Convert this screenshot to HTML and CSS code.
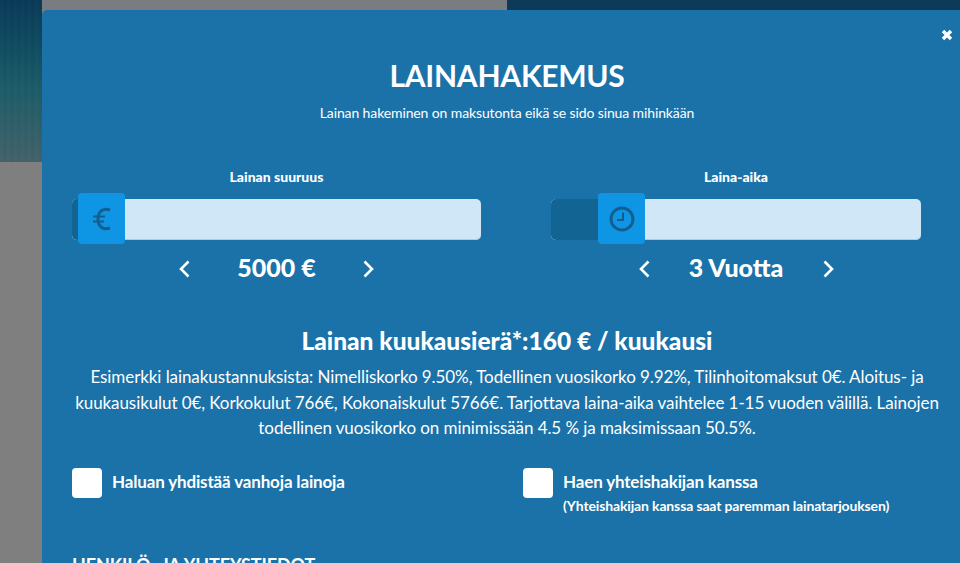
FILE: index.html
```html
<!DOCTYPE html>
<html lang="fi">
<head>
  <meta charset="UTF-8" />
  <title>Lainahakemus</title>
  <link rel="stylesheet" href="styles.css">
</head>
<body>

<div class="backdrop">
  <div class="bg-photo"></div>
  <div class="bg-gap"></div>
  <div class="bg-dark"></div>
</div>

<div class="modal">
  <svg class="close" width="12" height="12" viewBox="0 0 12 12"><path d="M2 2l8 8M10 2l-8 8" /></svg>
  <h1>LAINAHAKEMUS</h1>
  <p class="lead">Lainan hakeminen on maksutonta eikä se sido sinua mihinkään</p>

  <div class="sliders">
    <div class="slider-box">
      <div class="slider-label">Lainan suuruus</div>
      <div class="track amount">
        <div class="fill"></div>
        <div class="handle">
          <svg width="18" height="24" viewBox="0 0 18 24"><path d="M17 3.200C11 .5 5 4 5 12s6 11.500 12 8.800" fill="none" stroke="#125f8f" stroke-width="3"/><path d="M0 9.500h12M0 14.500h11" fill="none" stroke="#125f8f" stroke-width="2.200"/></svg>
        </div>
      </div>
      <div class="stepper">
        <svg class="chev" width="12" height="18" viewBox="0 0 12 18"><path d="M10.500 1.500L3 9l7.500 7.500" /></svg>
        <span class="value">5000 €</span>
        <svg class="chev" width="12" height="18" viewBox="0 0 12 18"><path d="M1.500 1.500L9 9l-7.500 7.500" /></svg>
      </div>
    </div>
    <div class="slider-box">
      <div class="slider-label">Laina-aika</div>
      <div class="track term">
        <div class="fill"></div>
        <div class="handle">
          <svg width="26" height="26" viewBox="0 0 26 26"><circle cx="13" cy="13" r="11" fill="none" stroke="#125f8f" stroke-width="3"/><path d="M14 6.500v7.500H8" fill="none" stroke="#125f8f" stroke-width="2"/></svg>
        </div>
      </div>
      <div class="stepper">
        <svg class="chev" width="12" height="18" viewBox="0 0 12 18"><path d="M10.500 1.500L3 9l7.500 7.500" /></svg>
        <span class="value">3 Vuotta</span>
        <svg class="chev" width="12" height="18" viewBox="0 0 12 18"><path d="M1.500 1.500L9 9l-7.500 7.500" /></svg>
      </div>
    </div>
  </div>

  <h2>Lainan kuukausierä*:160 € / kuukausi</h2>
  <p class="terms">Esimerkki lainakustannuksista: Nimelliskorko 9.50%, Todellinen vuosikorko 9.92%, Tilinhoitomaksut 0€. Aloitus- ja kuukausikulut 0€, Korkokulut 766€, Kokonaiskulut 5766€. Tarjottava laina-aika vaihtelee 1-15 vuoden välillä. Lainojen todellinen vuosikorko on minimissään 4.5 % ja maksimissaan 50.5%.</p>

  <div class="checks">
    <div class="check-item">
      <div class="checkbox"></div>
      <div class="check-text">Haluan yhdistää vanhoja lainoja</div>
    </div>
    <div class="check-item">
      <div class="checkbox"></div>
      <div class="check-text">Haen yhteishakijan kanssa
        <small>(Yhteishakijan kanssa saat paremman lainatarjouksen)</small>
      </div>
    </div>
  </div>

  <h3>HENKILÖ- JA YHTEYSTIEDOT</h3>
</div>

</body>
</html>
```

FILE: styles.css
```css
html, body {
  margin: 0;
  height: 100%;
  overflow: hidden;
}
body {
  font-family: Lato, sans-serif;
  background: #7f7f7f;
  color: white;
}
.backdrop {
  display: flex;
  height: 10px;
}
.bg-photo {
  width: 42px;
  height: 162px;
  background:
    repeating-linear-gradient(90deg, rgba(255,255,255,0.012) 0 3px, rgba(0,0,0,0.012) 3px 7px),
    linear-gradient(180deg, #0b3a59 0%, #0f4a60 25%, #1c5c68 55%, #44626a 100%);
}
.bg-gap {
  width: 465px;
  background: #797c80;
}
.bg-dark {
  flex: 1;
  background: #0d3a58;
}
.modal {
  position: absolute;
  left: 42px;
  top: 10px;
  width: 930px;
  height: 700px;
  box-sizing: border-box;
  padding: 0 30px;
  background: #1a72a9;
  border-radius: 5px 0 0 0;
  text-align: center;
}
.close {
  position: absolute;
  top: 19px;
  left: 899px;
  fill: none;
  stroke: white;
  stroke-width: 3.4;
}
h1 {
  margin: 0;
  padding-top: 46px;
  font-size: 30px;
  line-height: 38px;
  font-weight: 700;
  letter-spacing: -0.25px;
}
.lead {
  margin: 10px 0 0;
  font-size: 14px;
  line-height: 18px;
  letter-spacing: -0.12px;
}
.sliders {
  display: grid;
  grid-template-columns: 409px 370px;
  column-gap: 70px;
  margin-top: 46px;
}
.slider-label {
  font-size: 14px;
  font-weight: 900;
  line-height: 18px;
}
.track {
  position: relative;
  height: 41px;
  margin-top: 13px;
  background: #d0e7f8;
  border-radius: 5px;
  box-shadow: inset 0 -1px #a9cde6;
}
.fill {
  height: 41px;
  background: #126493;
  border-radius: 5px 0 0 5px;
}
.amount .fill { width: 6px; }
.term .fill { width: 47px; }
.handle {
  position: absolute;
  top: -6px;
  width: 47px;
  height: 51px;
  background: #0e95e4;
  border-radius: 4px;
  display: flex;
  align-items: center;
  justify-content: center;
}
.amount .handle { left: 6px; }
.term .handle { left: 47px; }
.stepper {
  display: flex;
  align-items: center;
  justify-content: center;
  margin-top: 12px;
  height: 30px;
}
.value {
  width: 173px;
  font-size: 25px;
  font-weight: 900;
  white-space: nowrap;
}
.chev {
  margin-top: 3px;
  fill: none;
  stroke: white;
  stroke-width: 2.6;
}
h2 {
  margin: 43px 0 0;
  font-size: 24.500px;
  line-height: 32px;
  font-weight: 900;
}
.terms {
  margin: 7px 0 0;
  font-size: 17px;
  line-height: 25.500px;
  letter-spacing: -0.08px;
}
.checks {
  display: grid;
  grid-template-columns: 451px 1fr;
  margin-top: 27px;
  text-align: left;
}
.check-item {
  display: flex;
  gap: 10px;
}
.checkbox {
  width: 30px;
  height: 30px;
  flex: none;
  background: white;
  border-radius: 4px;
}
.check-text {
  padding-top: 2px;
  font-size: 17px;
  font-weight: 700;
  line-height: 24px;
  letter-spacing: -0.15px;
}
.check-text small {
  display: block;
  font-size: 14px;
  line-height: 24px;
  letter-spacing: -0.14px;
}
h3 {
  margin: 36px 0 0;
  font-size: 18px;
  font-weight: 700;
  letter-spacing: -0.1px;
  text-align: left;
}
```
